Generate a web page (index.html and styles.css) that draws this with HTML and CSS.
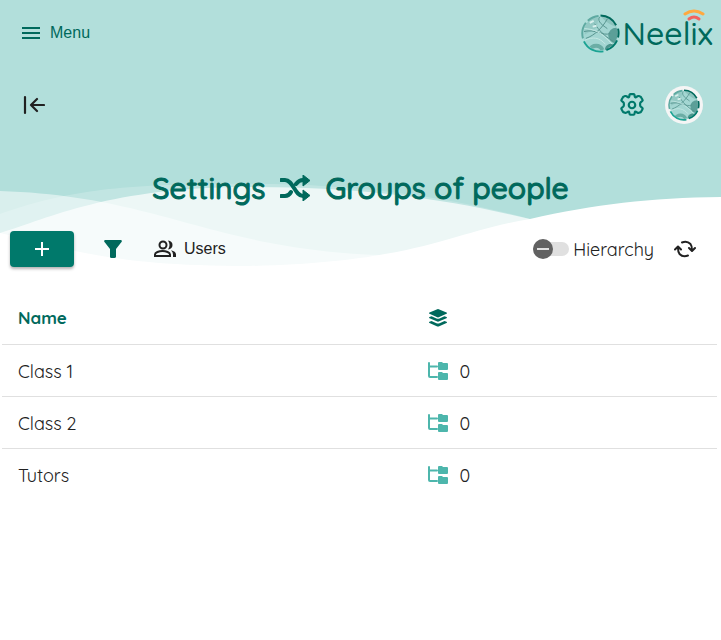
FILE: index.html
```html
<!DOCTYPE html>
<html lang="en">
<head>
<meta charset="utf-8">
<meta name="viewport" content="width=device-width, initial-scale=1">
<title>Neelix - Groups of people</title>
<link rel="stylesheet" href="styles.css">
</head>
<body>
<svg class="defs" aria-hidden="true">
  <symbol id="globe" viewBox="0 0 40 40">
    <clipPath id="disc"><circle cx="20" cy="20" r="17.5"/></clipPath>
    <circle cx="20" cy="20" r="18" fill="#a3d6d2"/>
    <g clip-path="url(#disc)" fill="none">
      <path d="M2 4h16l-2 10L4 21z" fill="#93c9c4"/>
      <path d="M19 0c3 6 11 12 20 14V0z" fill="#8cc3bd"/>
      <circle cx="36" cy="22" r="8" fill="#5c9f98"/>
      <path d="M9 37a7 7 0 0 1 13 0" stroke="#6bada5" stroke-width="4"/>
      <path d="M26 37a5 5 0 0 1 9-3" stroke="#4d958d" stroke-width="3"/>
      <path d="M14 10c5 7 9 12 19 18M3 18c12-3 19 5 27 2M27 5C22 14 14 22 5 25M19 3c-3 5 4 9 8 12" stroke="#56938e" stroke-width="1"/>
      <path d="M2 15c12 0 19 4 30 16M4 27c8-4 15-3 21 4" stroke="#c5e8e4" stroke-width="1"/>
      <path d="M9 9l4-2M12 13l4-1" stroke="#d9f0ed" stroke-width="2"/>
    </g>
    <g fill="none" stroke-width="2">
      <path d="M20 1.500a18.500 18.500 0 0 1 16 10M38 15a18.500 18.500 0 0 1 0 9" stroke="#00695c"/>
      <path d="M37 27a18.500 18.500 0 0 1-11 10" stroke="#00796b"/>
      <path d="M23 38.300A18.500 18.500 0 0 1 3 28" stroke="#1ba393"/>
      <path d="M2 25A18.500 18.500 0 0 1 5 9M7 7a18.500 18.500 0 0 1 11-5" stroke="#5ea9a1"/>
    </g>
  </symbol>
  <symbol id="tree" viewBox="0 0 20 18">
    <path d="M1 1v13q0 1 1 1h7M1 4.500h8" fill="none" stroke="#4db6ac" stroke-width="2" stroke-linecap="round"/>
    <path d="M10 1q0-1 1-1h3l1 1h4q1 0 1 1v5q0 1-1 1h-8q-1 0-1-1zM10 11q0-1 1-1h3l1 1h4q1 0 1 1v5q0 1-1 1h-8q-1 0-1-1z" fill="#4db6ac"/>
  </symbol>
</svg>

<header class="hero">
  <svg class="waves" viewBox="0 0 721 267" preserveAspectRatio="none" aria-hidden="true">
    <path class="wave-back" d="M0 214C60 193 110 185 210 184C350 181 450 197 530 219L721 230V267H0z"/>
    <path class="wave-mid" d="M0 191C160 196 210 249 380 255V267H0z"/>
    <path class="wave-front" d="M0 233C50 218 110 187 250 187C370 187 450 200 530 219V267H0z"/>
    <path class="wave-base" d="M0 233C70 249 110 266 250 266C420 262 450 232 530 219C595 204 650 198 721 197V267H0z"/>
  </svg>
  <nav class="topbar">
    <button class="menu" type="button">
      <svg width="18" height="12" viewBox="0 0 18 12"><path d="M0 1h18M0 6h18M0 11h18" stroke="currentColor" stroke-width="2"/></svg>
      <span>Menu</span>
    </button>
    <a class="brand" href="#">
      <svg width="39" height="39"><use href="#globe"/></svg>
      <span class="brand-name">Neelix
        <svg class="signal" width="22" height="13" viewBox="0 0 22 13" fill="none" stroke-linecap="round"><path d="M2 5q9-6 18 0" stroke="#ffa940" stroke-width="3"/><path d="M6 10q5-4 10 0" stroke="#f2635f" stroke-width="3"/></svg>
      </span>
    </a>
  </nav>
  <div class="subbar">
    <button class="icon-button collapse" type="button" aria-label="Collapse">
      <svg width="22" height="20" viewBox="0 0 22 20" fill="none" stroke="currentColor" stroke-width="2.200" stroke-linecap="round" stroke-linejoin="round"><path d="M2 2v16M21 10H8M14 4l-6 6 6 6"/></svg>
    </button>
    <div class="account">
      <button class="icon-button settings" type="button" aria-label="Settings">
        <svg width="26" height="26" viewBox="-12 -12 24 24" fill="none" stroke="currentColor" stroke-width="2" stroke-linejoin="round"><path d="M-1.500-10h3q.700 0 .800.800l.300 1.600q.200.800 1 .400l1.500-.9q.7-.4 1.400-.1l1 .400q.7.200 1 .8l1.200 2.100q.4.700-.2 1.200l-1.300 1.100q-.700.600-.700 1.300v1.600q0 .7.700 1.300l1.300 1.100q.600.500.2 1.200l-1.200 2.100q-.3.600-1 .8l-1 .4q-.7.300-1.400-.1l-1.500-.9q-.8-.4-1 .4l-.300 1.600q-.1.800-.800.800h-3q-.7 0-.8-.8l-.3-1.600q-.2-.8-1-.4l-1.500.9q-.7.400-1.400.1l-1-.4q-.7-.2-1-.8l-1.200-2.100q-.4-.7.200-1.200l1.300-1.100q.7-.6.7-1.300v-1.600q0-.7-.7-1.300l-1.300-1.100q-.6-.5-.2-1.200l1.200-2.100q.3-.6 1-.8l1-.4q.7-.3 1.400.1l1.500.9q.8.400 1-.4l.3-1.600q.1-.8.8-.8z"/><circle r="3"/></svg>
      </button>
      <button class="avatar" type="button" aria-label="Profile"><svg width="32" height="32"><use href="#globe"/></svg></button>
    </div>
  </div>
  <h1 class="title">
    <span>Settings</span>
    <svg width="30" height="26" viewBox="0 0 30 26"><path d="M1 5h4c8 0 10 16 18 16h2M1 21h4q4 0 6-4M16 9q3-4 7-4h2" fill="none" stroke="currentColor" stroke-width="4" stroke-linecap="round"/><path d="M23 0l7 5.500-7 5.500zM23 15l7 5.500-7 5.500z" fill="currentColor" stroke="currentColor" stroke-linejoin="round"/></svg>
    <span>Groups of people</span>
  </h1>
  <div class="toolbar">
    <button class="add" type="button" aria-label="Add"><svg width="14" height="14" viewBox="0 0 14 14"><path d="M7 0v14M0 7h14" stroke="currentColor" stroke-width="2"/></svg></button>
    <button class="icon-button filter" type="button" aria-label="Filter"><svg width="18" height="18" viewBox="0 0 18 18"><path d="M1 0h16q1.500.500.500 2L12 9v8q-.500 1-1.500 1h-3Q6 18 6 17V9L.500 2Q-.500.500 1 0z" fill="currentColor"/></svg></button>
    <button class="users" type="button">
      <svg width="24" height="24" viewBox="0 0 24 24" fill="none" stroke="currentColor" stroke-width="2"><circle cx="10" cy="8" r="3.500"/><path d="M2 19v-1.500c0-2 4-3.500 7.500-3.500s7.500 1.500 7.500 3.500V19z"/><path d="M15 3.500c6 0 6 9 0 9 2-3 2-6 0-9zM18 13.300c3 .7 5 2 5 4.200V20h-3v-2.500q0-2.500-2-4.200z" fill="currentColor" stroke="none"/></svg>
      <span>Users</span>
    </button>
    <label class="hierarchy">
      <input class="switch" type="checkbox">
      <span>Hierarchy</span>
    </label>
    <button class="icon-button refresh" type="button" aria-label="Refresh">
      <svg width="22" height="18" viewBox="0 0 22 18" fill="none" stroke="currentColor" stroke-width="2" stroke-linecap="round" stroke-linejoin="round"><path d="M8 2.500Q13 .500 16.500 4 18 6 18 10M15 8l3 3 3-3M14 15.500Q9 17.500 5.500 14 4 12 4 8M1 9.500l3-3 3 3"/></svg>
    </button>
  </div>
</header>

<main class="content">
  <table class="groups">
    <thead>
      <tr>
        <th scope="col">Name</th>
        <th scope="col" aria-label="Levels"><svg width="20" height="18" viewBox="0 0 20 18" fill="currentColor"><path d="M9.300.200q.700-.3 1.400 0L18.500 3.600q1 .600 0 1.200L10.700 8.300q-.7.300-1.400 0L1.500 4.800q-1-.6 0-1.200zM1.500 8l2-.800 5 2.300q1.500.600 3 0l5-2.300 2 .800q1 .600 0 1.200l-7.800 3.400q-.7.300-1.400 0L1.500 9.200q-1-.6 0-1.200zM1.500 12.800l2-.8 5 2.300q1.500.6 3 0l5-2.300 2 .8q1 .6 0 1.200l-7.800 3.400q-.7.300-1.400 0L1.500 14q-1-.6 0-1.200z"/></svg></th>
      </tr>
    </thead>
    <tbody>
      <tr><td>Class 1</td><td><span class="count"><svg width="20" height="18"><use href="#tree"/></svg>0</span></td></tr>
      <tr><td>Class 2</td><td><span class="count"><svg width="20" height="18"><use href="#tree"/></svg>0</span></td></tr>
      <tr><td>Tutors</td><td><span class="count"><svg width="20" height="18"><use href="#tree"/></svg>0</span></td></tr>
    </tbody>
  </table>
</main>
</body>
</html>
```
FILE: styles.css
```css
* { box-sizing: border-box; }

body {
  margin: 0;
  background: #fff;
  color: #212121;
  font-family: Quicksand, Lato, sans-serif;
  font-size: 18px;
  font-weight: 450;
}

button {
  padding: 0;
  border: 0;
  background: none;
  color: inherit;
  font-family: "Liberation Sans", sans-serif;
  font-size: 16px;
  cursor: pointer;
}

svg { display: block; flex: none; }

.defs { position: absolute; width: 0; height: 0; }

.hero {
  position: relative;
  background: #b2dfdb;
  color: #00695c;
}

.waves {
  position: absolute;
  inset: 0;
  width: 100%;
  height: 100%;
  fill: #fff;
}

.wave-back { opacity: 0.2; }
.wave-mid { opacity: 0.5; }
.wave-front { opacity: 0.7; }

.topbar, .subbar, .title, .toolbar { position: relative; display: flex; align-items: center; }

.topbar {
  justify-content: space-between;
  height: 66px;
  padding: 0 8px 0 22px;
}

.menu { display: flex; align-items: center; gap: 10px; }

.brand {
  display: flex;
  align-items: center;
  gap: 3px;
  color: #00695c;
  text-decoration: none;
}

.brand-name {
  position: relative;
  font-size: 32px;
  line-height: 40px;
  font-weight: 500;
}

.signal { position: absolute; top: -4px; right: 8px; }

.subbar {
  justify-content: space-between;
  height: 78px;
  padding: 0 18px 0 23px;
}

.collapse { color: #212121; }

.account { display: flex; align-items: center; gap: 20px; }

.settings { color: #00796b; }

.avatar {
  display: grid;
  place-items: center;
  width: 38px;
  height: 38px;
  border-radius: 50%;
  background: #f5f5f5;
}

.title {
  justify-content: center;
  gap: 15px;
  height: 87px;
  margin: 0;
  font-size: 30px;
  font-weight: 500;
  -webkit-text-stroke: 1px currentColor;
}

.toolbar {
  height: 36px;
  padding: 0 25px 0 10px;
}

.add {
  display: grid;
  place-items: center;
  width: 64px;
  height: 36px;
  border-radius: 4px;
  background: #00796b;
  color: #fff;
  box-shadow: 0 2px 3px rgba(0, 0, 0, 0.3);
}

.filter { margin-left: 30px; }

.users {
  display: flex;
  align-items: center;
  gap: 7px;
  margin-left: 31px;
  color: #212121;
}

.hierarchy {
  display: flex;
  align-items: center;
  gap: 4px;
  margin-left: auto;
  color: #212121;
}

.switch {
  position: relative;
  appearance: none;
  width: 36px;
  height: 14px;
  margin: 0;
  border-radius: 7px;
  background: #e0e0e0;
}

.switch::before {
  content: "";
  position: absolute;
  top: -3px;
  left: 0;
  width: 20px;
  height: 20px;
  border-radius: 50%;
  background: linear-gradient(#e0e0e0, #e0e0e0) center / 12px 2px no-repeat #616161;
}

.refresh { margin-left: 20px; color: #212121; }

.content { padding: 25px 4px 0 2px; }

.groups { width: 100%; border-collapse: collapse; table-layout: fixed; }

.groups th, .groups td {
  height: 52px;
  padding: 0 18px 0 16px;
  text-align: left;
}

.groups td { padding-top: 2px; border-top: 1px solid #e0e0e0; }
.groups th { color: #00695c; font-size: 17px; font-weight: 700; }
.groups th:first-child { width: 57%; }
.groups th:last-child, .groups td:last-child { padding-left: 18px; }

.count { display: flex; align-items: center; gap: 12px; }
```
